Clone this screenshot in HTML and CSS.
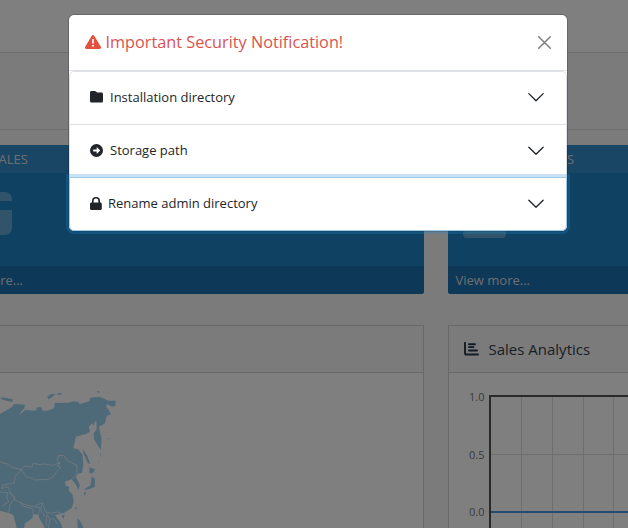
FILE: index.html
```html
<!DOCTYPE html>
<html lang="en">
<head>
<meta charset="utf-8">
<title>Dashboard</title>
<link rel="stylesheet" href="styles.css">
</head>
<body>
<header class="topbar"></header>
<div class="page-header"></div>
<main class="content">
  <section class="tile">
    <div class="tile-heading">TOTAL SALES</div>
    <div class="tile-body">
      <svg class="tile-icon card-icon" width="56" height="44" viewBox="0 0 56 44"><path d="M0 9V7a7 7 0 0 1 7-7h42a7 7 0 0 1 7 7v2zM0 18h56v18a7 7 0 0 1-7 7H7a7 7 0 0 1-7-7z"/></svg>
    </div>
    <div class="tile-footer">View more...</div>
  </section>
  <section class="tile">
    <div class="tile-heading">TOTAL CUSTOMERS</div>
    <div class="tile-body">
      <svg class="tile-icon user-icon" width="43" height="50" viewBox="0 0 43 50"><circle cx="21.500" cy="12" r="12"/><path d="M0 46c0-12 8-18 17-18h9c9 0 17 6 17 18 0 2-1 4-3 4H3c-2 0-3-2-3-4z"/></svg>
    </div>
    <div class="tile-footer">View more...</div>
  </section>
  <section class="card">
    <div class="card-header"></div>
    <svg class="map" width="180" height="155" viewBox="0 9 540 465">
      <path class="land" d="M0 132L35 112 42 102 75 104 73 115 58 133 65 130 75 120 108 122 110 112 125 112 127 122 142 122 162 115 164 99 205 98 220 94 235 96 240 102 268 94 270 83 300 80 325 92 347 92 346 108 335 110 322 102 318 110 325 118 333 133 320 138 315 160 297 170 300 185 305 208 302 240 282 208 281 190 290 178 289 152 284 155 282 168 277 160 266 170 270 185 258 192 228 200 220 235 235 238 248 255 250 285 246 308 232 312 228 322 240 345 235 360 228 345 215 328 195 335 197 347 208 350 205 360 218 375 221 395 215 415 190 430 165 435 180 455 188 474H135L118 445 115 435 100 432 97 445 75 460 72 474H50L40 435 28 430 0 422z"/>
      <path class="land" d="M247 235l15 23 9 25-8-4-12-27zM268 292l18 6-10 13-8-2zM276 318l9 10-1 22-14 6-16 4 3-6 14-7zM252 365l7 3-5 10zM141 80l12-8 13 0-8 8-12 8zM174 70l12 0-1 4-14 1zM289 64l10 0-2 6zM0 84l10-2 28 6-1 8-27-6zM232 444l9 10 10 20h-18zM225 410l5 2-2 10zM186 434l8 1-3 12-5-5zM320 204l4 2-3 2zM327 205l4 1-3 3zM301 246l2 10-2 6zM295 277l4-4-3 7z"/>
      <path class="borders" d="M0 276L22 282 38 292 64 299 73 288 95 291 100 280 122 284 130 282 158 286 180 278 172 274 175 257 191 256 202 272 230 285 231 310 215 328M64 299L45 320 42 340 8 345 5 356 24 350 30 366 43 378 45 390 72 403 100 410 127 398 137 426 155 430 172 426 188 432M64 299L78 320 98 325 103 330 145 328 160 320 170 305 182 292 172 288 180 278M0 366L24 368 20 382 26 395 5 410M28 366L43 385 30 405 26 430M65 400L67 408 98 416 100 432M104 410L120 414 113 436M127 400L122 420 135 440M140 430L150 450 160 444 172 462M140 436L138 470M150 450L145 474"/>
    </svg>
  </section>
  <section class="card">
    <div class="card-header">
      <svg class="chart-icon" width="15" height="14" viewBox="0 0 15 14"><path d="M1 .7v10.200q0 1.600 1.600 1.600H14M5 2.200h6M5 5.100h4.500M5 8.500h8"/></svg>
      <span>Sales Analytics</span>
    </div>
    <div class="plot">
      <div class="labels"><span>1.0</span><span>0.5</span><span>0.0</span></div>
      <svg class="grid" width="139" height="133" viewBox="489 395 139 133">
        <path class="rule" d="M521.500 396v140M552.500 396v140M583.500 396v140M613.500 396v140M490 454.500h150"/>
        <path class="frame" d="M490 540V396h160"/>
        <path class="series" d="M491 512h150"/>
      </svg>
    </div>
  </section>
</main>
<div class="backdrop">
  <div class="modal" role="dialog">
    <div class="modal-header">
      <svg class="warning" width="16" height="14" viewBox="0 0 16 14"><path fill-rule="evenodd" d="M8 0c.5 0 .9.200 1.200.7l6.600 11.100c.6 1-.1 2.200-1.200 2.200H1.400C.3 14-.4 12.800.2 11.800L6.800.7C7.100.2 7.500 0 8 0zM7.200 4v4.500h1.600V4zM8 9.700a1 1 0 1 0 0 2 1 1 0 0 0 0-2z"/></svg>
      <h5>Important Security Notification!</h5>
      <svg class="close" width="13" height="13" viewBox="0 0 13 13"><path d="M.7.7l11.600 11.600M12.300.7L.7 12.300"/></svg>
    </div>
    <div class="accordion">
      <div class="item">
        <svg class="icon" width="13" height="12" viewBox="0 0 13 12"><path d="M1.500 0h3.300c.5 0 .8.2 1.100.5l.6.6c.3.300.6.4 1 .4h4C12.400 1.500 13 2.100 13 3v7c0 .9-.6 1.500-1.500 1.500h-10C.6 11.500 0 10.900 0 10V1.500C0 .6.600 0 1.500 0z"/></svg>
        <span>Installation directory</span>
        <svg class="chevron" width="18" height="18" viewBox="0 0 16 16"><path d="M1.650 5L8 11.300 14.350 5"/></svg>
      </div>
      <div class="item">
        <svg class="icon" width="13" height="13" viewBox="0 0 13 13"><path fill-rule="evenodd" d="M6.500 0a6.500 6.500 0 1 0 0 13 6.500 6.500 0 0 0 0-13zM6.700 3l3.500 3.500L6.700 10V7.600H3.200V5.400H6.700z"/></svg>
        <span>Storage path</span>
        <svg class="chevron" width="18" height="18" viewBox="0 0 16 16"><path d="M1.650 5.500L8 11.800 14.350 5.500"/></svg>
      </div>
      <div class="item focused">
        <svg class="icon" width="12" height="13" viewBox="0 0 12 13"><path fill-rule="evenodd" d="M2 5.500V4a4 4 0 0 1 8 0v1.500h.3c.9 0 1.500.6 1.500 1.500v4.500c0 .9-.6 1.500-1.500 1.500H1.500C.6 13 0 12.400 0 11.500V7c0-.9.600-1.500 1.500-1.500zm1.600 0h4.800V4a2.400 2.400 0 0 0-4.800 0z"/></svg>
        <span>Rename admin directory</span>
        <svg class="chevron" width="18" height="18" viewBox="0 0 16 16"><path d="M1.650 5.500L8 11.800 14.350 5.500"/></svg>
      </div>
    </div>
  </div>
</div>
</body>
</html>
```
FILE: styles.css
```css
* { box-sizing: border-box; }
body {
  margin: 0;
  height: 528px;
  overflow: hidden;
  background: #f7f7f7;
  color: #212529;
  font: 13px/20px "Open Sans", sans-serif;
}
svg { display: block; flex: none; }
.topbar { height: 53px; background: #fff; border-bottom: 1px solid #d8d8d8; }
.page-header { height: 77px; border-bottom: 1px solid #dedede; }
.content {
  display: grid;
  grid-template-columns: 483px 483px;
  grid-template-rows: 149px 203px;
  gap: 31px 24px;
  margin: 15px 0 0 -59px;
}
.tile { background: #1e82c6; color: #fff; border-radius: 3px; overflow: hidden; }
.tile-heading { height: 28px; padding: 0 8px; line-height: 29px; font-size: 13px; letter-spacing: -.05px; background: #348ccc; color: #ddd; }
.tile-body { height: 93px; padding: 19px 15px; }
.tile-icon { fill: #fff; opacity: .3; }
.user-icon { margin-top: -4px; }
.tile-footer { height: 28px; padding: 0 7.500px; line-height: 28px; background: #1a70b0; color: #ddd; }
.card { background: #fff; border: 1px solid #d0d0d0; border-bottom: 0; }
.card-header {
  display: flex;
  align-items: center;
  gap: 9.500px;
  height: 47px;
  padding: 0 15px;
  background: #f7f7f7;
  border-bottom: 1px solid #d0d0d0;
  font-size: 15px;
  color: #33414b;
}
.chart-icon { fill: none; stroke: #23384a; stroke-width: 1.900; stroke-linecap: round; }
.map { margin-left: 58px; }
.land { fill: #9dd5f2; }
.borders { fill: none; stroke: #fff; stroke-width: 1.800; }
.plot { display: flex; gap: 5px; height: 155px; padding: 14px 0 0 20px; overflow: hidden; }
.labels { display: flex; flex-direction: column; gap: 37.500px; width: 15px; font-size: 11px; color: #777; }
.grid { margin-top: 8px; }
.rule { stroke: #ddd; fill: none; }
.frame { stroke: #545454; stroke-width: 2; fill: none; }
.series { stroke: #4a9ade; stroke-width: 2; }
.backdrop {
  position: absolute;
  inset: 0;
  padding: 14px 0 0 68px;
  background: rgba(0, 0, 0, .5);
}
.modal {
  width: 500px;
  height: 218px;
  background: #fff;
  background-clip: padding-box;
  border: 1px solid rgba(0, 0, 0, .175);
  border-radius: 6px;
}
.modal-header {
  display: flex;
  align-items: center;
  height: 56px;
  padding: 0 16px;
  border-bottom: 1px solid #dee2e6;
}
h5 { margin: -2px auto 0 4.500px; font: 16.250px/24px "Open Sans", sans-serif; color: #d9534f; }
.warning { fill: #e3503e; margin-top: -1px; }
.close { fill: none; stroke: #7f7f7f; stroke-width: 1.500; stroke-linecap: round; }
.accordion { border: 1px solid #dee2e6; border-radius: 5px; }
.item {
  display: flex;
  align-items: center;
  height: 53px;
  padding: 0 21px 2px 20px;
  border-bottom: 1px solid #dee2e6;
}
.item span { margin: 0 auto 0 7px; }
.icon { fill: #212529; }
.chevron { fill: none; stroke: #212529; stroke-width: 1.200; stroke-linecap: round; stroke-linejoin: round; }
.item.focused {
  height: 54px;
  margin: -1px -1px -1px;
  padding: 0 21px 2px 20px;
  border: 1px solid #a0cae5;
  border-radius: 0 0 5px 5px;
  box-shadow: 0 0 0 3px rgba(30, 145, 207, .25);
}
.item.focused span { margin-left: 6px; }
```
